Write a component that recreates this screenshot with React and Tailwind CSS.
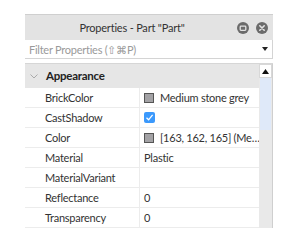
import React from "react";

const rows = [
  { name: "BrickColor", value: "Medium stone grey", swatch: true },
  { name: "CastShadow", check: true },
  { name: "Color", value: "[163, 162, 165] (Me…", swatch: true },
  { name: "Material", value: "Plastic" },
  { name: "MaterialVariant", value: "" },
  { name: "Reflectance", value: "0" },
  { name: "Transparency", value: "0" },
];

export default function App() {
  return (
    <div className="w-[300px] h-[248px] bg-white pt-[14px] pl-[25px] tracking-[-0.25px]" style={{ fontFamily: 'Lato, "Open Sans", sans-serif' }}>
      <div className="w-[248px] flex flex-col">
        <div className="h-[1px] bg-[#cfcfcf]" />
        <div className="h-[25px] bg-[#e3e3e3] flex items-center">
          <div className="flex-1 text-center text-[11px] text-[#333] leading-none pl-[2px] tracking-[-0.2px]">Properties - Part "Part"</div>
          <div className="flex items-center gap-[7px] pr-[5px]">
            <svg width="12" height="12" viewBox="0 0 12 12">
              <circle cx="6" cy="6" r="6" fill="#6b6b6b" />
              <rect x="3.2" y="4.2" width="5.6" height="4.2" rx="0.8" fill="none" stroke="#e3e3e3" strokeWidth="1.3" />
            </svg>
            <svg width="12" height="12" viewBox="0 0 12 12">
              <circle cx="6" cy="6" r="6" fill="#6b6b6b" />
              <path d="M3.8 3.8 L8.2 8.2 M8.2 3.8 L3.8 8.2" stroke="#e3e3e3" strokeWidth="1.6" strokeLinecap="round" />
            </svg>
          </div>
        </div>
        <div className="h-[19px] bg-white border-b border-r border-[#d4d4d4] flex items-center pl-[4px] pr-[4px]">
          <div className="flex-1 text-[11px] text-[#9a9a9a] leading-none">Filter Properties (⇧⌘P)</div>
          <svg width="6" height="4" viewBox="0 0 6 4"><path d="M0 0 L6 0 L3 4 Z" fill="#222" /></svg>
        </div>
        <div className="h-[4px]" />
        <div className="flex border-t border-[#d6d6d6]">
          <div className="w-[234px] flex flex-col">
            <div className="h-[24px] bg-[#e6e6e6] flex items-center">
              <svg className="ml-[5px]" width="8" height="5" viewBox="0 0 8 5"><path d="M0.5 0.5 L4 4 L7.5 0.5" fill="none" stroke="#aaa" strokeWidth="1" /></svg>
              <span className="ml-[8px] text-[11.5px] font-bold text-[#222] leading-none">Appearance</span>
            </div>
            {rows.map((r) => (
              <div key={r.name} className="h-[20px] flex border-b border-[#ececec] text-[11px] text-[#333] leading-none">
                <div className="w-[115px] pl-[20px] flex items-center border-r border-[#ececec]">{r.name}</div>
                <div className="flex-1 flex items-center pl-[4px] whitespace-nowrap overflow-hidden">
                  {r.swatch && <span className="w-[10px] h-[10px] bg-[#a3a2a5] border border-[#555] mr-[6px] shrink-0" />}
                  {r.check && (
                    <span className="w-[11px] h-[11px] bg-[#3b99fc] rounded-[2px] flex items-center justify-center">
                      <svg width="9" height="9" viewBox="0 0 9 9"><path d="M1.5 4.8 L3.6 6.8 L7.6 1.8" fill="none" stroke="white" strokeWidth="1.3" /></svg>
                    </span>
                  )}
                  {r.value}
                </div>
              </div>
            ))}
          </div>
          <div className="w-[14px] bg-[#e9e9e9] border-r border-[#cfcfcf] flex flex-col">
            <div className="h-[14px] bg-white border border-[#d8d8d8] flex items-center justify-center">
              <svg width="7" height="5" viewBox="0 0 7 5"><path d="M0 5 L3.5 0 L7 5 Z" fill="#111" /></svg>
            </div>
            <div className="h-[52px] bg-[#dfe9f9] mx-[1px]" />
          </div>
        </div>
      </div>
    </div>
  );
}
